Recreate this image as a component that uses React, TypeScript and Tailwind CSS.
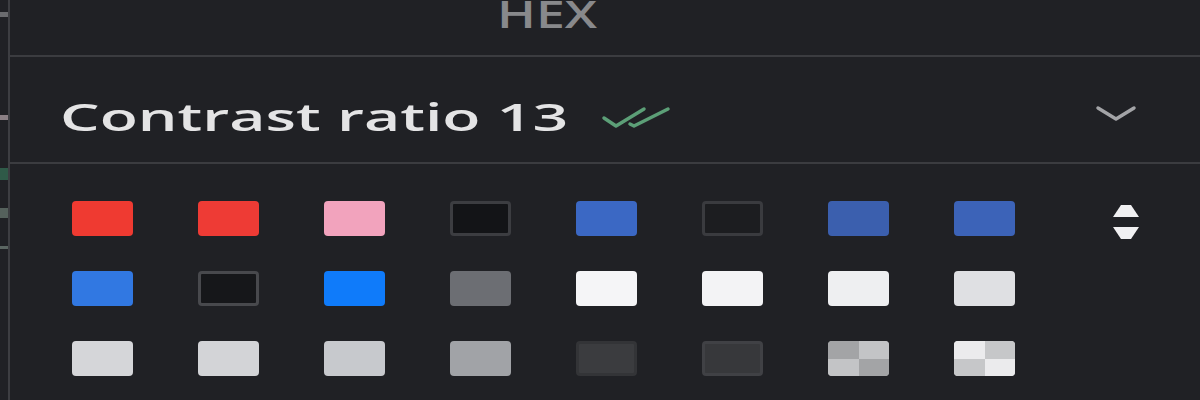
import React from "react";

const swatchRows: { bg: string; ring?: string; checker?: [string, string] }[][] = [
  [
    { bg: "bg-[#ef3a31]" },
    { bg: "bg-[#ee3b35]" },
    { bg: "bg-[#f2a3bd]" },
    { bg: "bg-[#131417]", ring: "border-[3px] border-[#3c3d41]" },
    { bg: "bg-[#3b68c4]" },
    { bg: "bg-[#1c1d20]", ring: "border-[3px] border-[#3a3b3f]" },
    { bg: "bg-[#3b5fae]" },
    { bg: "bg-[#3c63b8]" },
  ],
  [
    { bg: "bg-[#3178e2]" },
    { bg: "bg-[#16171a]", ring: "border-[3px] border-[#48494d]" },
    { bg: "bg-[#0f7bfa]" },
    { bg: "bg-[#6c6e73]" },
    { bg: "bg-[#f5f5f7]" },
    { bg: "bg-[#f3f3f5]" },
    { bg: "bg-[#eeeff1]" },
    { bg: "bg-[#dfe0e3]" },
  ],
  [
    { bg: "bg-[#d5d6d9]" },
    { bg: "bg-[#d3d4d7]" },
    { bg: "bg-[#c7c9cd]" },
    { bg: "bg-[#a1a3a7]" },
    { bg: "bg-[#3b3c3f]", ring: "border-[3px] border-[#333437]" },
    { bg: "bg-[#37383b]", ring: "border-[3px] border-[#404145]" },
    { bg: "bg-[#b4b5b7]", checker: ["#a3a4a6", "#c3c4c6"] },
    { bg: "bg-[#d8d8da]", checker: ["#ebebed", "#c6c7c9"] },
  ],
];

function Swatch({ bg, ring, checker }: { bg: string; ring?: string; checker?: [string, string] }) {
  return (
    <div className={`w-[61px] h-[35px] rounded-[4px] overflow-hidden ${bg} ${ring ?? ""}`}>
      {checker && (
        <div className="grid grid-cols-2 grid-rows-2 w-full h-full">
          <div style={{ background: checker[0] }} />
          <div style={{ background: checker[1] }} />
          <div style={{ background: checker[1] }} />
          <div style={{ background: checker[0] }} />
        </div>
      )}
    </div>
  );
}

export default function App() {
  return (
    <div
      className="w-[1200px] h-[400px] bg-[#202125] flex overflow-hidden"
      style={{ fontFamily: '"Open Sans", "Liberation Sans", sans-serif' }}
    >
      {/* neighbouring panel edge */}
      <div className="w-[8px] flex flex-col">
        <div className="h-[12px]" />
        <div className="h-[5px] bg-[#6a6b6e]" />
        <div className="h-[98px]" />
        <div className="h-[5px] bg-[#8a7f84]" />
        <div className="h-[48px]" />
        <div className="h-[12px] bg-[#2f5a48]" />
        <div className="h-[28px]" />
        <div className="h-[10px] bg-[#55615c]" />
        <div className="h-[28px]" />
        <div className="h-[20px] border-t-[3px] border-[#5b6662]" />
      </div>
      <div className="w-[2px] bg-[#3d3e42]" />

      <div className="flex-1 flex flex-col">
        <div className="h-[55px] pl-[487px]">
          <div className="w-[110px] -mt-[10px]">
            <span className="inline-block origin-left scale-x-[1.4] text-[37px] leading-[48px] font-semibold text-[#88898c]">
              HEX
            </span>
          </div>
        </div>
        <div className="h-[2px] bg-[#3b3c40]" />

        <div className="h-[105px] flex items-center pl-[50px] pr-[62px] pt-[14px]">
          <div className="w-[540px] h-[50px] flex items-center">
            <span className="inline-block origin-left scale-x-[1.69] text-[37px] leading-[50px] font-semibold text-[#e4e4e5] whitespace-nowrap">
              Contrast ratio 13
            </span>
          </div>
          <svg width="74" height="24" viewBox="0 0 74 24" className="mt-[1px]">
            <g fill="none" stroke="#5c9f77" strokeWidth="3.5" strokeLinecap="round" strokeLinejoin="round">
              <path d="M4 13 L16 21 L44 4" />
              <path d="M30 19 L34 21 L68 4" />
            </g>
          </svg>
          <div className="flex-1" />
          <svg width="44" height="20" viewBox="0 0 44 20" className="-mt-[8px]">
            <path d="M4 5 L22 16 L40 5" fill="none" stroke="#a3a4a7" strokeWidth="3.5" strokeLinecap="round" strokeLinejoin="round" />
          </svg>
        </div>

        <div className="h-[2px] bg-[#3b3c40]" />

        <div className="flex pt-[37px] pl-[62px]">
          <div className="grid grid-cols-[repeat(8,61px)] gap-x-[65px] gap-y-[35px]">
            {swatchRows.flat().map((s, i) => (
              <Swatch key={i} {...s} />
            ))}
          </div>
          <div className="ml-[96px] pt-[2px]">
            <svg width="30" height="38" viewBox="0 0 30 38">
              <path d="M10 2 L20 2 L28 14 L2 14 Z" fill="#f0f0f2" />
              <path d="M2 24 L28 24 L20 36 L10 36 Z" fill="#f0f0f2" />
            </svg>
          </div>
        </div>
      </div>
    </div>
  );
}
